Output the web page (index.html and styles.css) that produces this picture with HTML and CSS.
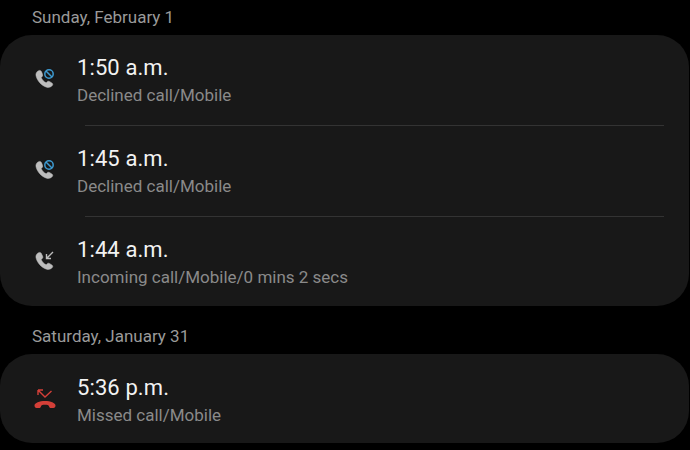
FILE: index.html
```html
<!DOCTYPE html>
<html lang="en">
<head>
    <meta charset="UTF-8">
    <title>Call history</title>
    <link rel="stylesheet" href="styles.css">
</head>
<body>
    <svg class="defs">
        <defs>
            <path id="handset" d="M3.2 1.2 C1.6 2 .6 3.4 1 5.4 C1.8 9.4 5.6 13.8 9.8 15 C11.6 15.5 13.4 15 14.6 13.6 C15.2 12.8 15 12 14.2 11.4 L12.2 10.2 C11.4 9.8 10.7 9.9 10.1 10.6 L9.4 11.3 C7.6 10.6 5.9 8.6 5.3 6.8 L6.1 6.2 C6.8 5.6 6.9 4.9 6.5 4.1 L5.4 1.8 C5 1 4.1 .8 3.2 1.2 Z"/>
        </defs>
    </svg>

    <h2 class="day">Sunday, February 1</h2>
    <div class="card">
        <div class="row">
            <svg class="icon" viewBox="0 0 20 20">
                <use href="#handset" transform="translate(-.2 1.2) scale(1.2)" class="phone"/>
                <circle cx="14" cy="6" r="6.2" class="cutout"/>
                <circle cx="14" cy="6" r="4.2" class="blocked"/>
                <path d="M11 3 L17 9" class="blocked"/>
            </svg>
            <div class="text">
                <div class="time">1:50 a.m.</div>
                <div class="info">Declined call/Mobile</div>
            </div>
        </div>
        <div class="sep"></div>
        <div class="row">
            <svg class="icon" viewBox="0 0 20 20">
                <use href="#handset" transform="translate(-.2 1.2) scale(1.2)" class="phone"/>
                <circle cx="14" cy="6" r="6.2" class="cutout"/>
                <circle cx="14" cy="6" r="4.2" class="blocked"/>
                <path d="M11 3 L17 9" class="blocked"/>
            </svg>
            <div class="text">
                <div class="time">1:45 a.m.</div>
                <div class="info">Declined call/Mobile</div>
            </div>
        </div>
        <div class="sep"></div>
        <div class="row">
            <svg class="icon" viewBox="0 0 20 20">
                <use href="#handset" transform="translate(-.2 1.2) scale(1.2)" class="phone"/>
                <path d="M18 2 L11.5 8.5 M11.5 4 V8.5 H16" class="arrow"/>
            </svg>
            <div class="text">
                <div class="time">1:44 a.m.</div>
                <div class="info">Incoming call/Mobile/0 mins 2 secs</div>
            </div>
        </div>
    </div>

    <h2 class="day">Saturday, January 31</h2>
    <div class="card">
        <div class="row">
            <svg class="icon" viewBox="0 0 20 20">
                <path d="M-.5 17.500 C-.5 14.800 4.500 13 10 13 C15.500 13 20.500 14.800 20.500 17.500 C20.500 19 19.700 20 18.500 20 H16 C14.800 20 14.200 19.200 14 18.200 C13.800 17.200 12 16.800 10 16.800 C8 16.800 6.200 17.200 6 18.200 C5.800 19.200 5.200 20 4 20 H1.500 C.3 20 -.5 19 -.5 17.500 Z" class="missed-fill"/>
                <path d="M3 2 L10 9 L16.500 3 M3 2 H8 M3 2 V7" class="missed"/>
            </svg>
            <div class="text">
                <div class="time">5:36 p.m.</div>
                <div class="info">Missed call/Mobile</div>
            </div>
        </div>
    </div>
</body>
</html>
```

FILE: styles.css
```css
body {
    margin: 0;
    background-color: #000;
    font-family: Roboto, "Liberation Sans", sans-serif;
    overflow: hidden;
}
.defs {
    display: none;
}
.day {
    margin: 0;
    padding-left: 32px;
    height: 35px;
    line-height: 35px;
    font-size: 17px;
    font-weight: 400;
    color: #9a9a9a;
}
.card {
    background-color: #181818;
    border-radius: 32px;
    margin: 0 1px 13px 0;
}
.row {
    display: flex;
    align-items: flex-start;
    padding: 19px 0 19px 35px;
}
.row:last-child {
    padding-bottom: 18px;
}
.row:only-child {
    padding: 20px 0 17px 35px;
}
.sep {
    height: 1px;
    margin: 0 25px 0 85px;
    background-color: #333;
}
.icon {
    width: 20px;
    height: 20px;
    flex: none;
    margin: 14px 22px 0 0;
    overflow: visible;
}
.text {
    flex: 1;
}
.time {
    font-size: 22px;
    line-height: 28px;
    letter-spacing: .1px;
    color: #f2f2f2;
}
.info {
    margin-top: 2px;
    font-size: 17px;
    line-height: 22px;
    color: #8a8a8a;
}
.phone {
    fill: #bdbdbd;
    stroke: #bdbdbd;
    stroke-width: .4;
}
.cutout {
    fill: #181818;
}
.blocked {
    fill: none;
    stroke: #3d9ad1;
    stroke-width: 1.5;
}
.arrow {
    fill: none;
    stroke: #bdbdbd;
    stroke-width: 1.4;
}
.missed-fill {
    fill: #d33f38;
}
.missed {
    fill: none;
    stroke: #d33f38;
    stroke-width: 1.4;
}
```
